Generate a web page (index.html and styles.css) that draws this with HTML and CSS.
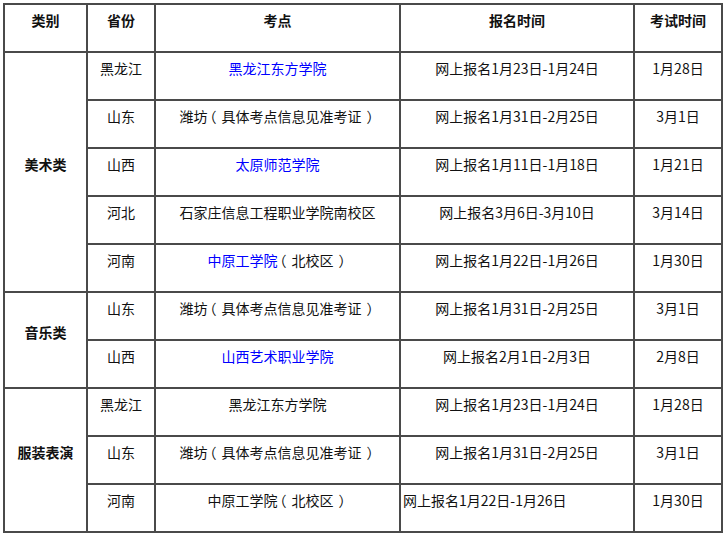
FILE: index.html
```html
<!DOCTYPE html>
<html lang="zh-CN">
<head>
<meta charset="utf-8">
<title>考点</title>
<link rel="stylesheet" href="styles.css">
</head>
<body>
<table class="exam">
  <colgroup>
    <col class="c1"><col class="c2"><col class="c3"><col class="c4"><col class="c5">
  </colgroup>
  <thead>
    <tr><th>类别</th><th>省份</th><th>考点</th><th>报名时间</th><th>考试时间</th></tr>
  </thead>
  <tbody>
    <tr><td rowspan="5" class="cat">美术类</td><td>黑龙江</td><td><span class="link">黑龙江东方学院</span></td><td>网上报名1月23日-1月24日</td><td>1月28日</td></tr>
    <tr><td>山东</td><td>潍<span class="sq">坊</span><span class="wd">（</span>具体考点信息见准考<span class="wd">证</span><span class="sq">）</span></td><td>网上报名1月31日-2月25日</td><td>3月1日</td></tr>
    <tr><td>山西</td><td><span class="link">太原师范学院</span></td><td>网上报名1月11日-1月18日</td><td>1月21日</td></tr>
    <tr><td>河北</td><td>石家庄信息工程职业学院南校区</td><td>网上报名3月6日-3月10日</td><td>3月14日</td></tr>
    <tr><td>河南</td><td><span class="link">中原工学<span class="sq">院</span></span><span class="wd">（</span>北校<span class="wd">区</span><span class="sq">）</span></td><td>网上报名1月22日-1月26日</td><td>1月30日</td></tr>
    <tr><td rowspan="2" class="cat">音乐类</td><td>山东</td><td>潍<span class="sq">坊</span><span class="wd">（</span>具体考点信息见准考<span class="wd">证</span><span class="sq">）</span></td><td>网上报名1月31日-2月25日</td><td>3月1日</td></tr>
    <tr><td>山西</td><td><span class="link">山西艺术职业学院</span></td><td>网上报名2月1日-2月3日</td><td>2月8日</td></tr>
    <tr><td rowspan="3" class="cat">服装表演</td><td>黑龙江</td><td>黑龙江东方学院</td><td>网上报名1月23日-1月24日</td><td>1月28日</td></tr>
    <tr><td>山东</td><td>潍<span class="sq">坊</span><span class="wd">（</span>具体考点信息见准考<span class="wd">证</span><span class="sq">）</span></td><td>网上报名1月31日-2月25日</td><td>3月1日</td></tr>
    <tr><td>河南</td><td>中原工学<span class="sq">院</span><span class="wd">（</span>北校<span class="wd">区</span><span class="sq">）</span></td><td class="left">网上报名1月22日-1月26日</td><td>1月30日</td></tr>
  </tbody>
</table>
</body>
</html>
```
FILE: styles.css
```css
html, body {
  margin: 0;
  padding: 0;
  background: #fff;
}
body {
  padding: 3px;
  font-family: "Noto Sans CJK SC", "Noto Sans", sans-serif;
  font-size: 14px;
  color: #111;
}
.exam {
  border-collapse: collapse;
  table-layout: fixed;
  width: 720px;
  border: 2px solid #4a4a4a;
}
.c1 { width: 83px; }
.c2 { width: 68px; }
.c3 { width: 245px; }
.c4 { width: 234px; }
.c5 { width: 88px; }
.exam tr { height: 48px; }
.exam th, .exam td {
  border: 2px solid #4a4a4a;
  padding: 0 0 16px 0;
  line-height: 20px;
  text-align: center;
  vertical-align: middle;
  white-space: nowrap;
  overflow: hidden;
}
.exam th { font-weight: bold; }
.exam td.cat { font-weight: bold; }
.exam td.left { text-align: left; padding-left: 2px; }
.link { color: #0000ff; }
.sq { letter-spacing: -5px; }
.wd { letter-spacing: 5px; }
.link .sq { color: #0000ff; }
```
